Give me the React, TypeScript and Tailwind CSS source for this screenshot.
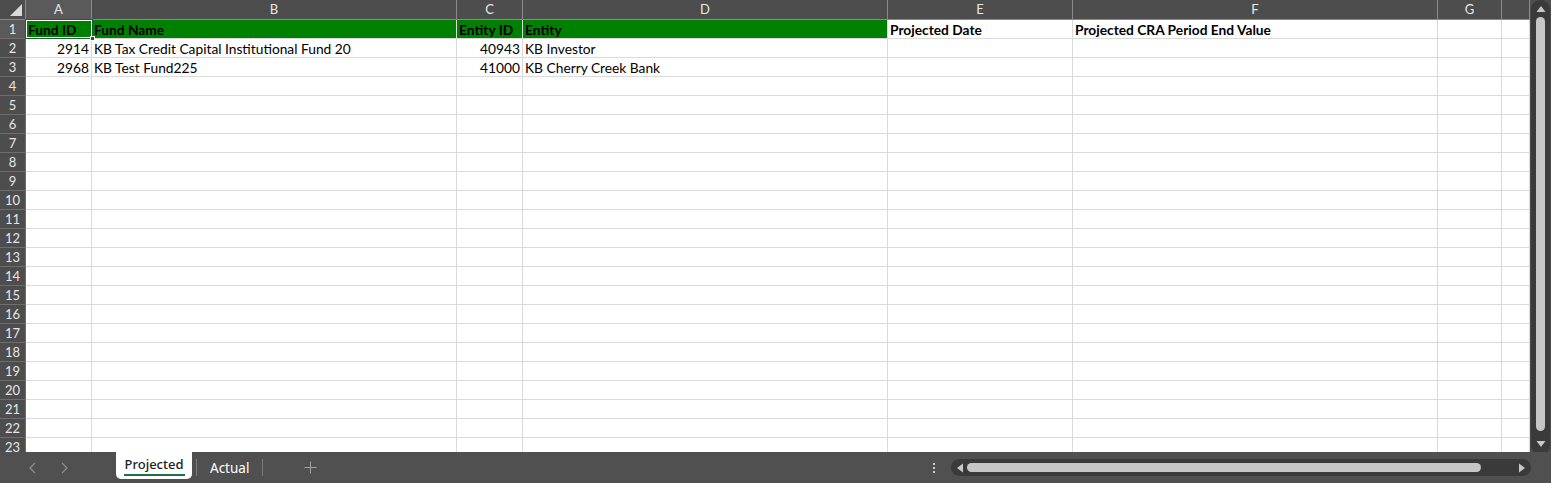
import React from "react";

const cols = ["A", "B", "C", "D", "E", "F", "G", ""];
const widths = [66, 365, 66, 365, 185, 365, 64, 28];

type Cell = { v: string; right?: boolean; bold?: boolean; green?: boolean };

const data: Cell[][] = [
  [
    { v: "Fund ID", bold: true, green: true },
    { v: "Fund Name", bold: true, green: true },
    { v: "Entity ID", bold: true, green: true },
    { v: "Entity", bold: true, green: true },
    { v: "Projected Date", bold: true },
    { v: "Projected CRA Period End Value", bold: true },
    { v: "" },
    { v: "" },
  ],
  [
    { v: "2914", right: true },
    { v: "KB Tax Credit Capital Institutional Fund 20" },
    { v: "40943", right: true },
    { v: "KB Investor" },
    { v: "" },
    { v: "" },
    { v: "" },
    { v: "" },
  ],
  [
    { v: "2968", right: true },
    { v: "KB Test Fund225" },
    { v: "41000", right: true },
    { v: "KB Cherry Creek Bank" },
    { v: "" },
    { v: "" },
    { v: "" },
    { v: "" },
  ],
];

const font = { fontFamily: "Lato, 'Open Sans', sans-serif" };

export default function App() {
  const rows = Array.from({ length: 23 }, (_, i) => i + 1);
  return (
    <div className="w-[1551px] h-[483px] bg-[#505050] flex flex-col overflow-hidden" style={font}>
      <div className="flex h-[452px] overflow-hidden">
        {/* sheet */}
        <div className="relative w-[1530px] h-[452px] overflow-hidden bg-white">
          {/* header row */}
          <div className="flex h-[20px] bg-[#4d4d4d]">
            <div className="w-[26px] h-[20px] relative border-r border-b border-[#8a8a8a] shrink-0">
              <svg className="absolute right-[3px] bottom-[3px]" width="12" height="12" viewBox="0 0 12 12">
                <polygon points="12,0 12,12 0,12" fill="#d9d9d9" />
              </svg>
            </div>
            {cols.map((c, i) => (
              <div
                key={i}
                className={`h-[20px] shrink-0 border-r border-b border-[#8a8a8a] flex items-center justify-center text-[13px] text-[#e6e6e6] ${i === 0 ? "bg-[#5a5a5a]" : ""}`}
                style={{ width: widths[i] }}
              >
                {c}
              </div>
            ))}
          </div>
          {rows.map((r) => {
            const rowData = data[r - 1];
            return (
              <div key={r} className="flex h-[19px]">
                <div
                  className={`w-[26px] shrink-0 h-[19px] border-r border-b border-[#6e6e6e] flex items-center justify-center pt-[1px] text-[13px] text-[#e6e6e6] ${r === 1 ? "bg-[#5a5a5a]" : "bg-[#4d4d4d]"}`}
                >
                  {r}
                </div>
                {widths.map((w, i) => {
                  const cell = rowData ? rowData[i] : undefined;
                  return (
                    <div
                      key={i}
                      className={`shrink-0 h-[19px] border-r border-b border-[#dadada] flex items-center px-[2px] pt-[1px] text-[13.75px] leading-none text-black whitespace-nowrap overflow-visible ${cell?.green ? "bg-[#008000]" : ""} ${cell?.right ? "justify-end" : ""} ${cell?.bold ? "font-bold" : ""}`}
                      style={{ width: w }}
                    >
                      {cell?.v}
                    </div>
                  );
                })}
              </div>
            );
          })}
          {/* selection */}
          <div className="absolute left-[25px] top-[19px] w-[68px] h-[20px] border border-[#1a5e35] shadow-[inset_0_0_0_1px_#ffffff] pointer-events-none" />
          <div className="absolute left-[90px] top-[36px] w-[5px] h-[5px] bg-[#1a5e35] border border-white" />
        </div>
        {/* vertical scrollbar */}
        <div className="w-[21px] h-[452px] bg-[#4d4d4d] flex justify-center">
          <div className="w-[19px] h-[455px] bg-[#3a3a3a] rounded-full flex flex-col items-center pt-[5px]">
            <svg width="10" height="8" viewBox="0 0 10 8">
              <polygon points="5,1 9.5,7 0.5,7" fill="#c8c8c8" />
            </svg>
            <div className="w-[9px] h-[414px] bg-[#c6c6c6] rounded-full mt-[4px]" />
            <svg className="mt-[9px]" width="10" height="8" viewBox="0 0 10 8">
              <polygon points="0.5,1 9.5,1 5,7" fill="#c8c8c8" />
            </svg>
          </div>
        </div>
      </div>
      {/* tab bar */}
      <div className="flex h-[31px] items-start bg-[#505050] relative">
        <div className="flex items-center h-[31px]">
          <span className="ml-[26px] w-[14px] flex justify-center">
            <svg width="8" height="12" viewBox="0 0 8 12"><polyline points="6,1 1,6 6,11" fill="none" stroke="#8c8c8c" strokeWidth="1.3" /></svg>
          </span>
          <span className="ml-[17px] w-[14px] flex justify-center">
            <svg width="8" height="12" viewBox="0 0 8 12"><polyline points="2,1 7,6 2,11" fill="none" stroke="#8c8c8c" strokeWidth="1.3" /></svg>
          </span>
        </div>
        <div className="ml-[45px] w-[76px] h-[27px] bg-white rounded-b-[5px] flex flex-col items-center pt-[3px]">
          <span className="text-[13px] font-medium text-[#222] leading-[18px]" style={{ fontFamily: "'Noto Sans', sans-serif" }}>Projected</span>
          <div className="w-[61px] h-[2px] bg-[#1e7145] mt-[1px]" />
        </div>
        <div className="ml-[4px] mt-[7px] w-px h-[17px] bg-[#7a7a7a]" />
        <span className="ml-[13px] mt-[6px] text-[13.5px] text-white leading-[20px]" style={{ fontFamily: "'Noto Sans', sans-serif" }}>Actual</span>
        <div className="ml-[13px] mt-[7px] w-px h-[17px] bg-[#7a7a7a]" />
        <svg className="ml-[41px] mt-[9px]" width="13" height="13" viewBox="0 0 13 13">
          <line x1="6.5" y1="0.5" x2="6.5" y2="12.5" stroke="#a0a0a0" strokeWidth="1" />
          <line x1="0.5" y1="6.5" x2="12.5" y2="6.5" stroke="#a0a0a0" strokeWidth="1" />
        </svg>
        <div className="absolute left-[933px] top-[11px] flex flex-col gap-[2px]">
          <div className="w-[2px] h-[2px] bg-[#d0d0d0]" />
          <div className="w-[2px] h-[2px] bg-[#d0d0d0]" />
          <div className="w-[2px] h-[2px] bg-[#d0d0d0]" />
        </div>
        <div className="absolute left-[951px] top-[7px] w-[580px] h-[17px] rounded-full bg-[#3a3a3a] flex items-center px-[5px]">
          <svg width="8" height="10" viewBox="0 0 8 10"><polygon points="1,5 7,0.5 7,9.5" fill="#c8c8c8" /></svg>
          <div className="ml-[3px] w-[514px] h-[9px] rounded-full bg-[#c6c6c6]" />
          <div className="flex-1" />
          <svg width="8" height="10" viewBox="0 0 8 10"><polygon points="1,0.5 7,5 1,9.5" fill="#c8c8c8" /></svg>
        </div>
      </div>
    </div>
  );
}
